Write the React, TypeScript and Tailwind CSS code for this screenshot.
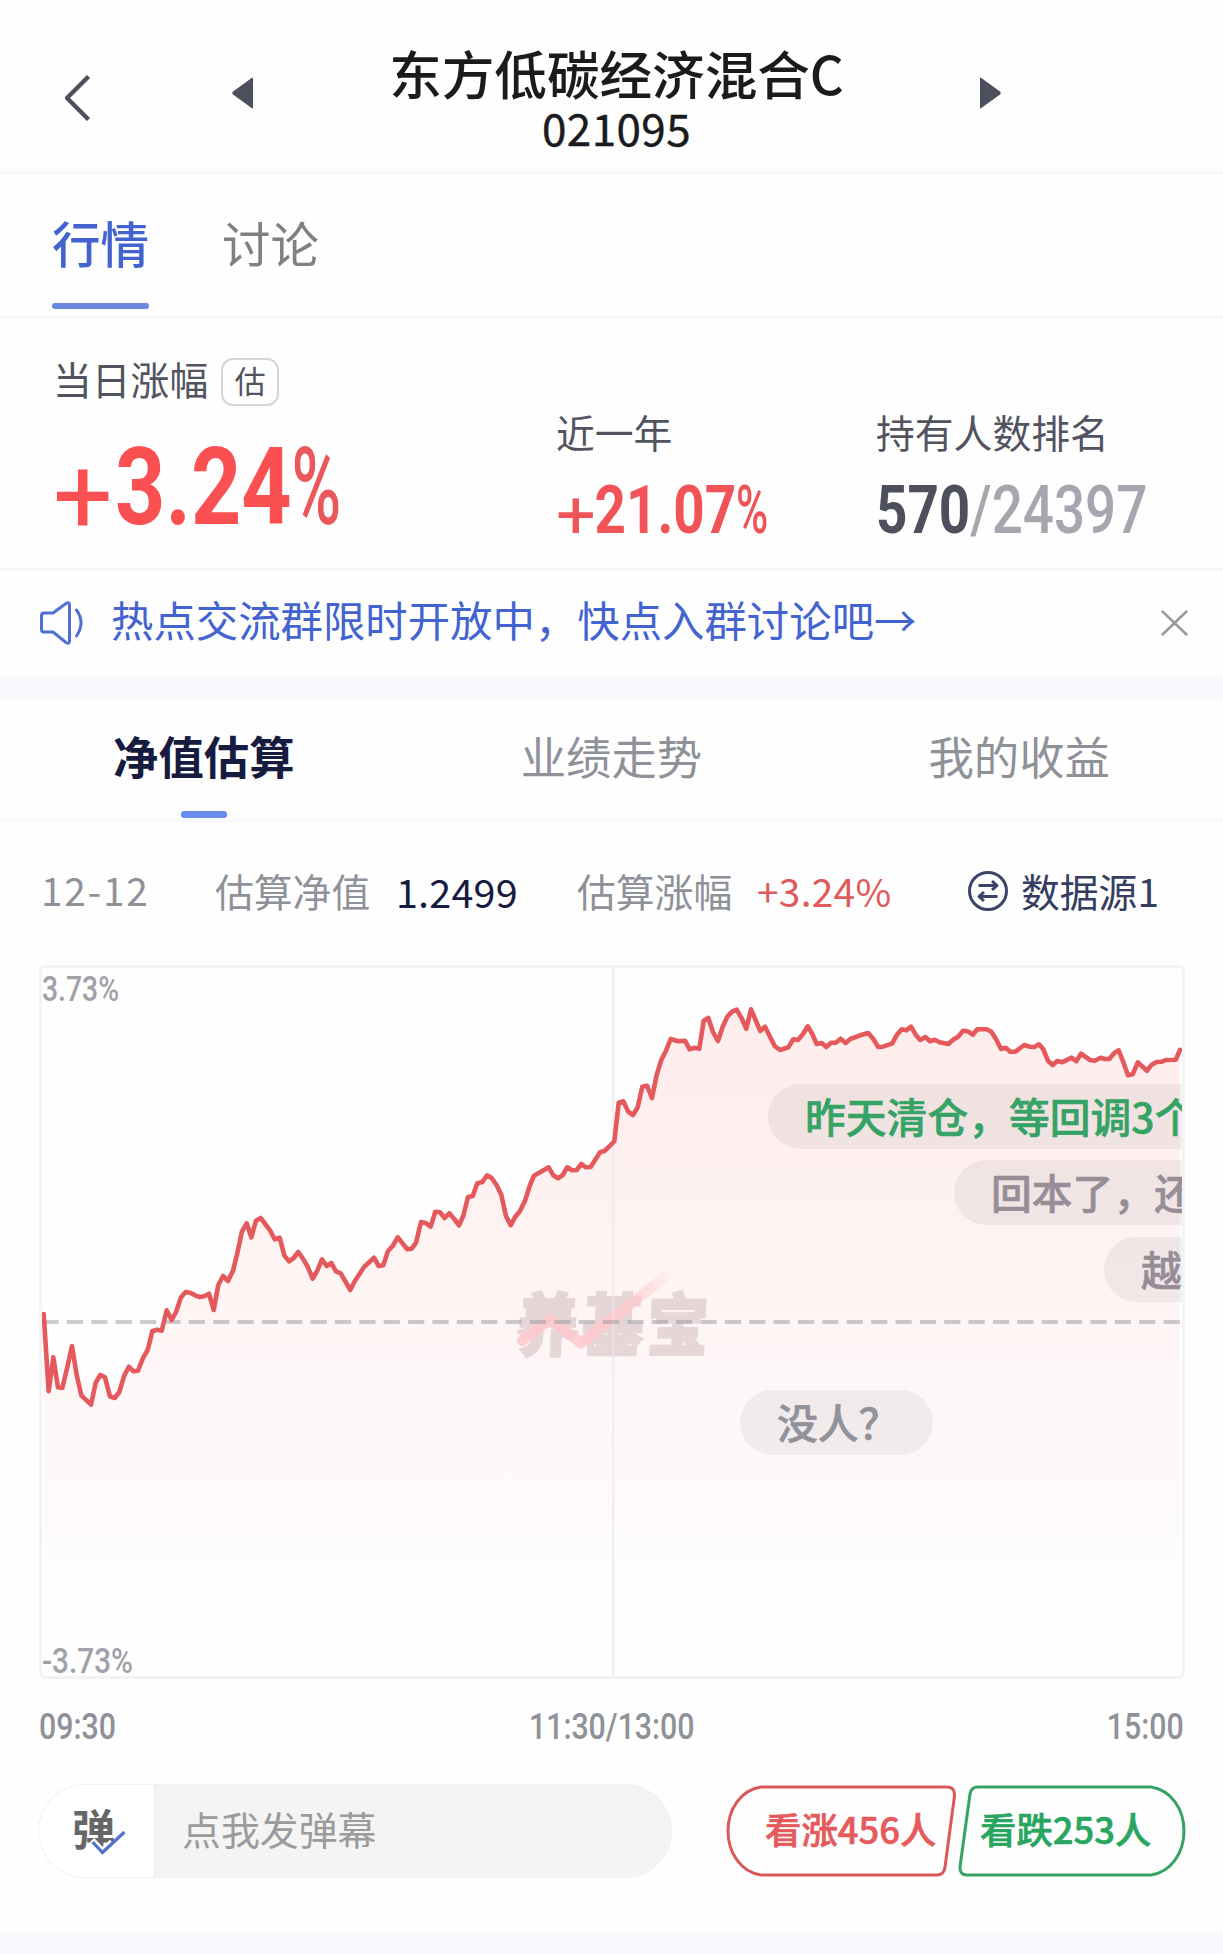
import React from 'react';

type Point = [number, number];

// Intraday estimate line, one point per sampled minute
const LINE_POINTS: Point[] = [
  [43.7, 1314], [48.7, 1391.3], [53.3, 1357.3], [58, 1387.3], [62.3, 1388], [67.3, 1367.3], [72, 1346], [76.7, 1375],
  [81.3, 1395.3], [91, 1404.7], [95.7, 1382.7], [100.3, 1375], [105, 1377.3], [110, 1396.3], [114.7, 1398], [119.3, 1392],
  [124.3, 1375.3], [129, 1366.7], [133.3, 1371.3], [138, 1370.7], [143, 1358], [147.7, 1350], [152.3, 1331.3], [157, 1329.7],
  [161.7, 1330.7], [166.7, 1310.3], [171.7, 1320], [176, 1312], [181, 1297.3], [185.7, 1292], [190.3, 1292.7], [195, 1295.3],
  [199.7, 1297], [204.3, 1296.3], [209, 1293.7], [213.7, 1310], [218.3, 1285], [223, 1276], [228, 1281], [233, 1270.7],
  [237.3, 1253.3], [242, 1231.3], [246.7, 1223.3], [251.3, 1237.3], [256, 1220.7], [260.7, 1218], [270, 1230.3], [274.7, 1239.3],
  [279.7, 1237.7], [284.3, 1255.3], [289, 1261.3], [293.7, 1258], [298.3, 1252], [303.3, 1259.3], [307.7, 1266.7], [312.7, 1278.7],
  [317.3, 1270.7], [322, 1259.3], [326.7, 1266], [331.3, 1263], [336, 1271.3], [340.7, 1273.3], [350.3, 1290], [355, 1280.7],
  [364.3, 1266.7], [374, 1257.7], [378.7, 1266], [383.3, 1265.3], [388, 1251], [392.7, 1246], [397.7, 1237.3], [407.3, 1249.3],
  [411.7, 1248.7], [416, 1242.7], [421, 1222], [425.7, 1223], [430.7, 1226.7], [435.3, 1211.7], [440, 1212.3], [444.7, 1218],
  [449.3, 1213.3], [454.3, 1219], [459, 1225.3], [463.3, 1215.7], [468, 1197], [472.7, 1196], [477.3, 1183.3], [482.3, 1182],
  [487, 1175.3], [491.7, 1178], [496.7, 1185.3], [501.3, 1194.7], [506, 1216], [510.7, 1225.3], [515.3, 1216.7], [520, 1211],
  [525, 1200.7], [529.7, 1186], [534, 1175.7], [548.7, 1167.3], [553.3, 1175.3], [558, 1178.3], [562.7, 1175], [567.3, 1167.3],
  [572, 1170.3], [576.7, 1170], [581.3, 1164], [586, 1167.3], [590.7, 1167], [595.7, 1159], [600, 1152.3], [605, 1150.7],
  [614.3, 1141.3], [618.7, 1102.7], [623.3, 1101.3], [628.3, 1111.7], [633, 1115], [637.7, 1107.3], [642.3, 1086.7], [647, 1085.7],
  [652, 1098], [656.7, 1074.7], [661.3, 1060], [666, 1050.7], [670.7, 1039], [678.3, 1041.3], [685, 1040.7], [689.7, 1049.3],
  [694.7, 1047.7], [699.3, 1048.7], [703.7, 1020.7], [708.3, 1018], [713, 1032], [718, 1041], [722.7, 1026.7], [727.3, 1016.7],
  [732, 1011.7], [736.7, 1009.7], [741.7, 1018.3], [746.3, 1028.7], [751, 1009.3], [760.3, 1031], [765, 1026.7], [774.7, 1046],
  [780, 1050], [788.3, 1047.3], [793.3, 1039.3], [798, 1040], [803, 1034], [807.7, 1026.3], [812.3, 1034], [816.7, 1044],
  [821.7, 1043], [826.3, 1047], [831, 1042.7], [835.7, 1042.7], [840.7, 1038.7], [845.7, 1043], [850.3, 1039], [860, 1035.3],
  [868.3, 1033], [873.3, 1039], [878.3, 1047], [883, 1046.7], [892.3, 1043.3], [897, 1034.7], [901.7, 1029.3], [906.3, 1030.3],
  [911, 1026.7], [915.7, 1034.7], [920.3, 1040], [925.3, 1037], [930, 1041.3], [934.7, 1039.7], [939.7, 1042.3], [948.3, 1044],
  [953.7, 1039.3], [958.3, 1036.7], [963, 1030.7], [967.7, 1031.3], [972.7, 1034.7], [977.3, 1029.3], [986.7, 1029.3], [991.3, 1031.7],
  [996, 1039], [1001, 1049], [1005.7, 1047.7], [1010.3, 1051.7], [1015.3, 1051.7], [1024.3, 1045], [1029.7, 1046.7], [1034.3, 1047],
  [1039, 1044.3], [1043.3, 1049.3], [1048, 1060.7], [1052.7, 1065], [1057.3, 1061], [1062, 1062.3], [1071.7, 1057.7], [1076.3, 1061.3],
  [1081, 1053.7], [1090, 1060], [1094.7, 1060.7], [1100.7, 1057.7], [1104.7, 1059], [1109.3, 1059], [1114.3, 1053], [1118.7, 1050.3],
  [1123.3, 1062], [1128, 1075.3], [1132.7, 1074.3], [1137.7, 1062.3], [1147, 1070.7], [1151.7, 1064.7], [1156.7, 1062], [1162, 1061.7],
  [1166, 1060], [1175.7, 1059.7], [1180, 1050],
];

const linePath = 'M' + LINE_POINTS.map(([x, y]) => `${x} ${y}`).join('L');
const areaPath = `${linePath}V1676H43.7Z`;

const DANMAKU = [
  { text: '昨天清仓，等回调3个点', className: 'left-[726px] top-[116px] text-[#35a366]' },
  { text: '回本了，还要不要拿', className: 'left-[912px] top-[192px] text-[#978d97]' },
  { text: '越来越好', className: 'left-[1062px] top-[269px] text-[#978d97]' },
  { text: '没人？', className: 'left-[698px] top-[422px] w-[193px] text-[#92929b]' },
];

function Header() {
  return (
    <header className="flex h-[174px] items-start border-b-[3px] border-[#f5f6fa] pl-[63px]">
      <svg className="mt-[74px] h-[48px] w-[28px]" viewBox="0 0 28 48" fill="none" stroke="#4d4f5c" strokeWidth="4.4">
        <path d="M25.500 2.500L4 24L25.500 45.500" strokeLinejoin="round" />
      </svg>
      <svg className="mt-[77px] ml-[141px] h-[32px] w-[21px]" viewBox="0 0 21 32" fill="#4d4f5c">
        <path d="M21 1v30q0 1-1 .3L1 17.500q-1.500-1.500 0-3L20 .7q1-.7 1 .3z" />
      </svg>
      <div className="flex w-[727px] flex-col items-center pt-[46px] text-[#1b1b1d]">
        <h1 className="text-[52.6px] leading-none font-medium">东方低碳经济混合C</h1>
        <p className="mt-[6px] text-[44px] leading-none tracking-[0.4px] [-webkit-text-stroke:0.4px]">021095</p>
      </div>
      <svg className="mt-[77px] h-[32px] w-[21px]" viewBox="0 0 21 32" fill="#4d4f5c">
        <path d="M0 1v30q0 1 1 .3L20 17.500q1.500-1.500 0-3L1 .7Q0 0 0 1z" />
      </svg>
    </header>
  );
}

function PageTabs() {
  return (
    <nav className="flex h-[145px] gap-[73px] border-b-[4px] border-[#f5f7fa] pl-[52px] text-[48.5px] leading-none">
      <div className="flex flex-col pt-[44px]">
        <span className="font-medium text-[#4263d0]">行情</span>
        <span className="mt-[36.500px] h-[6px] w-[97px] rounded-full bg-[#6c87e0]" />
      </div>
      <span className="pt-[44px] text-[#808080]">讨论</span>
    </nav>
  );
}

function Stats() {
  return (
    <section className="flex h-[252px] border-b-[3px] border-[#f2f4f9] pl-[53px]">
      <div className="w-[503px] pt-[39px]">
        <div className="flex h-[48px]">
          <span className="pt-[1px] text-[38.8px] leading-none text-[#51535e]">当日涨幅</span>
          <span className="ml-[13px] h-[48px] w-[58px] rounded-[12px] border-[2.5px] border-[#d3d5d8] pt-[4px] text-center text-[31px] leading-none text-[#51535e]">
            估
          </span>
        </div>
        <div className="mt-[28px] flex origin-left scale-x-[0.82] font-[Roboto] text-[107px] leading-none font-bold whitespace-nowrap text-[#fb5052]">
          <span className="mr-[15px] origin-left translate-y-[9px] scale-x-[1.2] font-normal">+</span>
          <span>3.24</span>
          <span className="origin-left scale-x-[0.77] font-medium text-[#ea585b]">%</span>
        </div>
      </div>
      <div className="w-[320px] pt-[93px]">
        <p className="text-[38.8px] leading-none text-[#51535e]">近一年</p>
        <p className="mt-[27px] flex origin-left scale-x-[0.83] font-[Roboto] text-[66px] leading-none font-bold whitespace-nowrap text-[#f05457]">
          <span className="mr-[9px] origin-left translate-y-[5px] scale-x-[1.28] font-normal">+</span>
          <span>21.07</span>
          <span className="origin-left scale-x-[0.8] font-medium">%</span>
        </p>
      </div>
      <div className="pt-[93px]">
        <p className="text-[38.8px] leading-none text-[#51535e]">持有人数排名</p>
        <p className="mt-[27px] origin-left scale-x-[0.83] font-[Roboto] text-[66px] leading-none font-bold whitespace-nowrap text-[#4d4f5c]">
          570<span className="font-medium text-[#a5a6ae]">/24397</span>
        </p>
      </div>
    </section>
  );
}

function Notice() {
  return (
    <section className="flex h-[104px] items-center pl-[39px]">
      <svg className="h-[44px] w-[46px]" viewBox="0 0 46 44" fill="none" stroke="#5270d2" strokeWidth="3" strokeLinejoin="round" strokeLinecap="round">
        <path d="M14 12H5q-2.500 0-2.500 2.500v14Q2.500 31 5 31h9L27 41.500q3.500 2 3.500-1.500V4q0-3.500-3.500-1.500z" />
        <path d="M37.500 9q9 12.500 0 26" />
      </svg>
      <p className="mb-[8px] ml-[26px] w-[1050px] text-[42.4px] leading-none text-[#4263d0]">
        热点交流群限时开放中，快点入群讨论吧→
      </p>
      <svg className="h-[26px] w-[27px]" viewBox="0 0 27 26" stroke="#999" strokeWidth="2.500" strokeLinecap="round">
        <path d="M1.500 1.500L25.500 24.500M25.500 1.500L1.500 24.500" />
      </svg>
    </section>
  );
}

function ChartTabs() {
  return (
    <nav className="grid h-[122px] grid-cols-3 border-b-[3px] border-[#f7f8fa] pt-[33px] text-center text-[45.4px] leading-none text-[#8f9199]">
      <div className="flex flex-col items-center">
        <span className="font-bold text-[#161b3f]">净值估算</span>
        <span className="mt-[33px] h-[7px] w-[46px] rounded-[3px] bg-[#6c8bee]" />
      </div>
      <span>业绩走势</span>
      <span>我的收益</span>
    </nav>
  );
}

function EstimateRow() {
  return (
    <div className="flex h-[143px] items-center pb-[6px] pl-[41px] text-[38.8px] leading-none whitespace-nowrap text-[#8f9199]">
      <span className="mb-[3px] w-[174px] tracking-[1.8px]">12-12</span>
      <span className="w-[181px]">估算净值</span>
      <span className="w-[181px] text-[39.500px] tracking-[0.2px] text-[#161b3f]">1.2499</span>
      <span className="w-[180px]">估算涨幅</span>
      <span className="w-[210px] tracking-[0.3px] text-[#e05a5c]">+3.24%</span>
      <svg className="h-[42px] w-[42px]" viewBox="0 0 42 42" fill="none" stroke="#3b4468" strokeWidth="3">
        <circle cx="21" cy="21" r="18.500" />
        <path d="M11.500 15.500H29M25 11L30 15.500L25 20M30.500 26.500H13M17 22L12 26.500L17 31" strokeLinejoin="round" />
      </svg>
      <span className="ml-[12px] text-[#343c60]">数据源1</span>
    </div>
  );
}

function Chart() {
  return (
    <section className="relative mx-[39px] h-[714px] w-[1146px] overflow-hidden rounded-[6px] border-[3px] border-[#f2f3f6]">
      <div className="absolute top-[323px] left-[476px] -skew-x-3 scale-y-[1.12] text-[60px] leading-none font-bold tracking-[5px] text-[#e5dddf] [-webkit-text-stroke:3.5px_#e5dddf] [stroke-linejoin:round]">
        养基宝
      </div>
      <svg className="absolute inset-0 h-[708px] w-[1140px]" viewBox="42 968 1140 708" fill="none">
        <defs>
          <linearGradient id="area" x1="0" y1="1010" x2="0" y2="1660" gradientUnits="userSpaceOnUse">
            <stop offset="0" stopColor="#fa5040" stopOpacity="0.1" />
            <stop offset="0.5" stopColor="#fa5050" stopOpacity="0.05" />
            <stop offset="1" stopColor="#fa5050" stopOpacity="0" />
          </linearGradient>
          <linearGradient id="swoosh" x1="521" y1="0" x2="668" y2="0" gradientUnits="userSpaceOnUse">
            <stop offset="0.7" stopColor="#ffc8cc" stopOpacity="0.85" />
            <stop offset="1" stopColor="#ffc8cc" stopOpacity="0.15" />
          </linearGradient>
        </defs>
        <path d={areaPath} fill="url(#area)" />
        <path d="M522 1341L550 1319L581 1343L664 1278" stroke="url(#swoosh)" strokeWidth="10.500" strokeLinecap="round" strokeLinejoin="round" />
        <path d="M613.300 968V1676" stroke="#e6e4f0" strokeOpacity="0.7" strokeWidth="2" />
        <path d="M42 1322H1181" stroke="#99979f" strokeOpacity="0.5" strokeWidth="4" strokeDasharray="16.200 8.170" strokeDashoffset="-0.500" />
        <path d={linePath} stroke="#e5595c" strokeWidth="4.600" strokeLinejoin="round" strokeLinecap="round" />
      </svg>
      <span className="absolute top-[4px] left-0 origin-left scale-x-[0.81] font-[Roboto] text-[35px] leading-none font-medium text-[#a0a1a9]">
        3.73%
      </span>
      <span className="absolute bottom-[-3px] left-0 origin-left scale-x-[0.85] font-[Roboto] text-[35px] leading-none font-medium text-[#a0a1a9]">
        -3.73%
      </span>
      {DANMAKU.map((item) => (
        <div
          key={item.text}
          className={`absolute h-[65px] rounded-full bg-black/5 px-[37px] pt-[12px] text-[40.8px] leading-none font-medium whitespace-nowrap [-webkit-text-stroke:0.6px] ${item.className}`}
        >
          {item.text}
        </div>
      ))}
    </section>
  );
}

function TimeAxis() {
  return (
    <div className="mx-[39px] mt-[30px] flex justify-between font-[Roboto] text-[36.500px] leading-none font-medium text-[#8f9199]">
      <span className="origin-left scale-x-[0.83]">09:30</span>
      <span className="scale-x-[0.83]">11:30/13:00</span>
      <span className="origin-right scale-x-[0.83]">15:00</span>
    </div>
  );
}

function Footer() {
  return (
    <div className="mt-[38px] flex h-[94px] items-center pl-[38px]">
      <div className="flex h-[94px] w-[634px] overflow-hidden rounded-full border-[1.500px] border-[#f0f0f0] bg-[#f4f4f4]">
        <div className="relative w-[116px] border-r border-[#ececec] bg-white">
          <span className="absolute top-[21px] left-[33px] text-[43px] leading-none font-bold text-[#666]">弹</span>
          <svg className="absolute top-[45px] left-[51px] h-[28px] w-[38px]" viewBox="0 0 38 28" fill="none">
            <path d="M2 10L12.500 21L22 12" stroke="#fff" strokeWidth="6" />
            <path d="M2.500 12L12.500 22.500L34.500 2" stroke="#5270cc" strokeWidth="3.200" />
          </svg>
        </div>
        <span className="pt-[24px] pl-[27px] text-[38.900px] leading-none text-[#9b9b9b]">点我发弹幕</span>
      </div>
      <div className="relative ml-[54px] h-[92px] w-[231px]">
        <svg className="absolute inset-0 h-[92px] w-[231px]" viewBox="0 0 231 92" fill="none" stroke="#d9595b" strokeWidth="3">
          <path d="M35 2H221Q229 2 228.500 11L219 82Q218 90 211 90H35C15 87 2 68 2 46S15 5 35 2Z" strokeLinejoin="round" />
        </svg>
        <span className="absolute top-[25px] left-[39px] text-[36.400px] leading-none font-medium whitespace-nowrap text-[#e55a5c] [-webkit-text-stroke:0.6px]">看涨456人</span>
      </div>
      <div className="relative ml-[1px] h-[92px] w-[228px]">
        <svg className="absolute inset-0 h-[92px] w-[228px]" viewBox="0 0 228 92" fill="none" stroke="#35a366" strokeWidth="3">
          <path d="M193 2H20Q13 2 12 9L2 82Q1.500 90 9 90H193C213 87 226 68 226 46S213 5 193 2Z" strokeLinejoin="round" />
        </svg>
        <span className="absolute top-[25px] left-[22px] text-[36.400px] leading-none font-medium whitespace-nowrap text-[#28a55e] [-webkit-text-stroke:0.6px]">看跌253人</span>
      </div>
    </div>
  );
}

export default function App() {
  return (
    <div className="h-[1954px] w-[1223px] overflow-hidden bg-[#fefefe] font-['Noto_Sans_CJK_SC',sans-serif]">
      <Header />
      <PageTabs />
      <Stats />
      <Notice />
      <div className="h-[25px] bg-[#f6f8fc]" />
      <ChartTabs />
      <EstimateRow />
      <Chart />
      <TimeAxis />
      <Footer />
      <div className="mt-[54px] h-[22px] bg-[#f6f8fc]" />
    </div>
  );
}
